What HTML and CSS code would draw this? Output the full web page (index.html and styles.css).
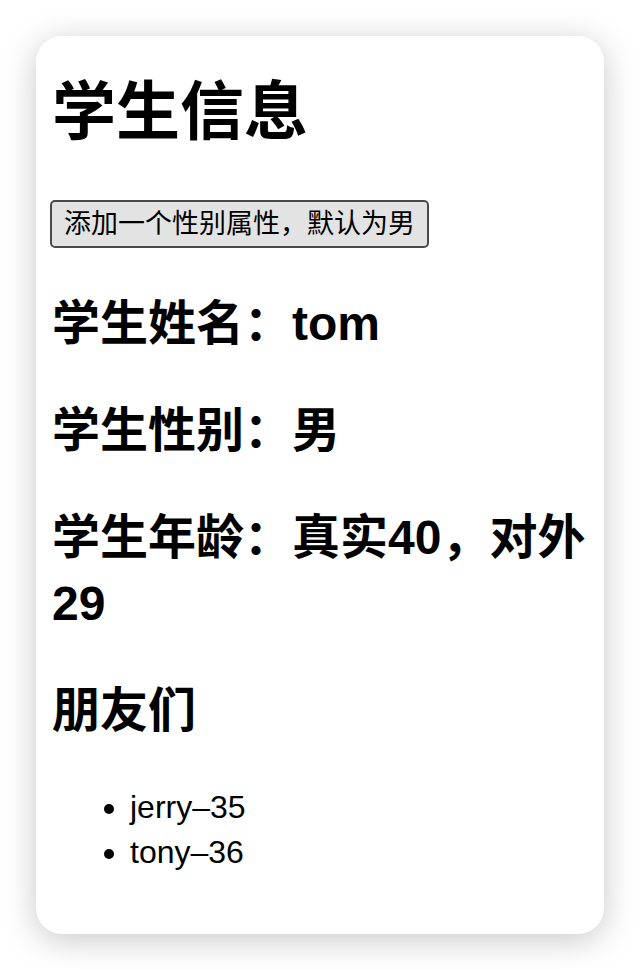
FILE: index.html
```html
<!doctype html>
<html>
  <head>
    <meta charset="utf-8">
    <meta name="viewport" content="width=device-width, initial-scale=1.0"/>
    <title>学生信息</title>
    <link rel="stylesheet" href="styles.css">
  </head>
  <body>
    <div class="window">
      <div id="app">
        <h1>学生信息</h1>
        <button class="add-btn">添加一个性别属性，默认为男</button>
        <h2>学生姓名：tom</h2>
        <h2>学生性别：男</h2>
        <h2>学生年龄：真实40，对外29</h2>
        <h2>朋友们</h2>
        <ul class="friends">
          <li>jerry–35</li>
          <li>tony–36</li>
        </ul>
      </div>
    </div>
  </body>
</html>
```
FILE: styles.css
```css
html, body {
  margin: 0;
  padding: 0;
  background: #fff;
}

* {
  font-family: 'Liberation Sans', 'Noto Sans CJK SC', sans-serif;
}

.window {
  display: flow-root;
  margin: 36px;
  height: 898px;
  box-sizing: border-box;
  padding: 0 16px;
  background: #fff;
  border-radius: 26px;
  box-shadow: 0 6px 34px rgba(0, 0, 0, 0.22);
}

h1 {
  font-size: 64px;
  line-height: 90px;
  margin: 31px 0 43px;
  font-weight: bold;
}

h2 {
  font-size: 48px;
  line-height: 66px;
  margin: 41px 0;
  font-weight: bold;
}

.add-btn {
  font-size: 27px;
  line-height: 36px;
  padding: 4px 12px;
  margin: 0 0 2px -2px;
  color: #000;
  background: #e3e3e3;
  border: 2px solid #4a4a4a;
  border-radius: 5px;
  vertical-align: top;
}

.friends {
  margin: 32px 0;
  padding-left: 78px;
  font-size: 32px;
  line-height: 45px;
}
```
